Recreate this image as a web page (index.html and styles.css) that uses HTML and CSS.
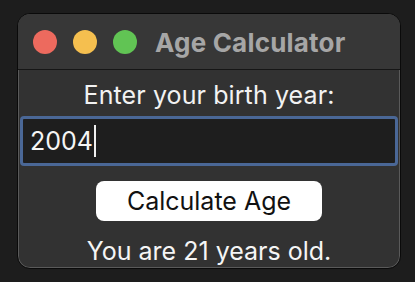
FILE: index.html
```html
<!DOCTYPE html>
<html>
<head>
<meta charset="utf-8">
<link rel="stylesheet" href="styles.css">
</head>
<body>
<div class="window">
  <div class="titlebar">
    <div class="lights">
      <span class="light red"></span>
      <span class="light yellow"></span>
      <span class="light green"></span>
    </div>
    <div class="title">Age Calculator</div>
  </div>
  <div class="content">
    <div class="label">Enter your birth year:</div>
    <div class="input"><span class="value">2004</span><span class="caret"></span></div>
    <div class="btn">Calculate Age</div>
    <div class="result">You are 21 years old.</div>
  </div>
</div>
</body>
</html>
```
FILE: styles.css
```css
html, body {
  margin: 0;
  padding: 0;
  background: #1d1d1d;
  width: 415px;
  height: 282px;
  overflow: hidden;
  font-family: Inter, "Liberation Sans", sans-serif;
}
.window {
  margin: 13px 0 0 17px;
  width: 384px;
  height: 256px;
  box-sizing: border-box;
  border-radius: 13px;
  border: 1px solid #0a0a0a;
  box-shadow: inset 0 0 0 1px #5a5a5a;
  background: #323232;
  overflow: hidden;
  display: flex;
  flex-direction: column;
}
.titlebar {
  height: 56px;
  flex: none;
  background: #373737;
  border-bottom: 1px solid #161616;
  display: flex;
  align-items: center;
  padding-left: 15px;
  box-sizing: border-box;
  padding-top: 1px;
}
.lights {
  display: flex;
  gap: 16px;
}
.light {
  width: 24px;
  height: 24px;
  border-radius: 50%;
  display: block;
}
.red { background: #ed6a5e; }
.yellow { background: #f5bf4f; }
.green { background: #61c454; }
.title {
  margin-left: 18px;
  color: #a6a6a6;
  font-weight: 700;
  font-size: 26px;
  letter-spacing: 0.2px;
}
.content {
  display: flex;
  flex-direction: column;
  align-items: center;
  padding: 0 2px;
}
.label {
  color: #f2f2f2;
  font-size: 25px;
  margin-top: 10px;
  line-height: 30px;
  letter-spacing: 0.1px;
}
.input {
  align-self: stretch;
  margin-top: 6px;
  height: 50px;
  box-sizing: border-box;
  border: 3px solid #4a6796;
  border-radius: 4px;
  background: #1e1e1e;
  display: flex;
  align-items: center;
  padding-left: 7px;
}
.value {
  color: #f5f5f5;
  font-size: 25px;
}
.caret {
  width: 2px;
  height: 32px;
  background: #f0f0f0;
  margin-left: 1px;
}
.btn {
  margin-top: 15px;
  width: 226px;
  height: 40px;
  border-radius: 8px;
  background: #ffffff;
  color: #111;
  font-size: 25px;
  display: flex;
  align-items: center;
  justify-content: center;
}
.result {
  color: #f5f5f5;
  font-size: 25px;
  margin-top: 15px;
  line-height: 30px;
}
```
